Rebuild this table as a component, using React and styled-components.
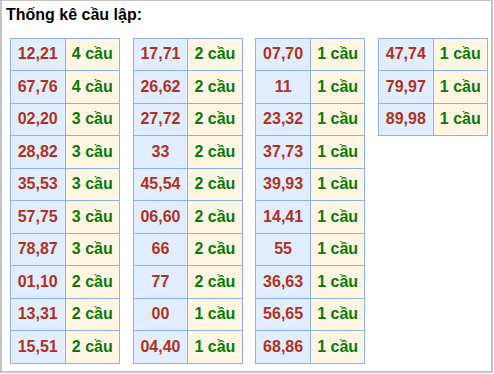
import React from 'react';
import styled, { createGlobalStyle } from 'styled-components';

const columns = [
  [
    ['12,21', 4], ['67,76', 4], ['02,20', 3], ['28,82', 3], ['35,53', 3],
    ['57,75', 3], ['78,87', 3], ['01,10', 2], ['13,31', 2], ['15,51', 2],
  ],
  [
    ['17,71', 2], ['26,62', 2], ['27,72', 2], ['33', 2], ['45,54', 2],
    ['06,60', 2], ['66', 2], ['77', 2], ['00', 1], ['04,40', 1],
  ],
  [
    ['07,70', 1], ['11', 1], ['23,32', 1], ['37,73', 1], ['39,93', 1],
    ['14,41', 1], ['55', 1], ['36,63', 1], ['56,65', 1], ['68,86', 1],
  ],
  [['47,74', 1], ['79,97', 1], ['89,98', 1]],
];

const GlobalStyle = createGlobalStyle`
  html, body {
    margin: 0;
    padding: 0;
    background: #ffffff;
  }
  body {
    font-family: "Liberation Sans", Arial, sans-serif;
  }
`;

const Box = styled.div`
  box-sizing: border-box;
  width: 493px;
  height: 373px;
  border: 1px solid #c4c4c4;
  border-width: 1px 2px 2px 2px;
  padding: 5px 0 0 4px;
  overflow: hidden;
`;

const Title = styled.div`
  font-size: 16px;
  font-weight: bold;
  color: #000;
  line-height: 18px;
  height: 18px;
`;

const Tables = styled.div`
  display: flex;
  align-items: flex-start;
  gap: 12.7px;
  margin-top: 13.5px;
  padding-left: 4px;
`;

const Table = styled.table`
  border-collapse: collapse;
  table-layout: fixed;
  width: 110px;
`;

const Row = styled.tr`
  height: 32.5px;
`;

const Cell = styled.td`
  border: 1px solid #8db0ee;
  padding: 0;
  text-align: center;
  vertical-align: middle;
  font-size: 16px;
  font-weight: bold;
  white-space: nowrap;
  background: ${(p) => (p.$kind === 'pair' ? '#e1eeff' : '#fff5e3')};
  color: ${(p) => (p.$kind === 'pair' ? '#b0321c' : '#087a08')};
`;

export default function App() {
  return (
    <>
      <GlobalStyle />
      <Box>
        <Title>Thống kê cầu lập:</Title>
        <Tables>
          {columns.map((rows, i) => (
            <Table key={i}>
              <tbody>
                {rows.map(([pair, count]) => (
                  <Row key={pair}>
                    <Cell $kind="pair">{pair}</Cell>
                    <Cell $kind="count">{count} cầu</Cell>
                  </Row>
                ))}
              </tbody>
            </Table>
          ))}
        </Tables>
      </Box>
    </>
  );
}
